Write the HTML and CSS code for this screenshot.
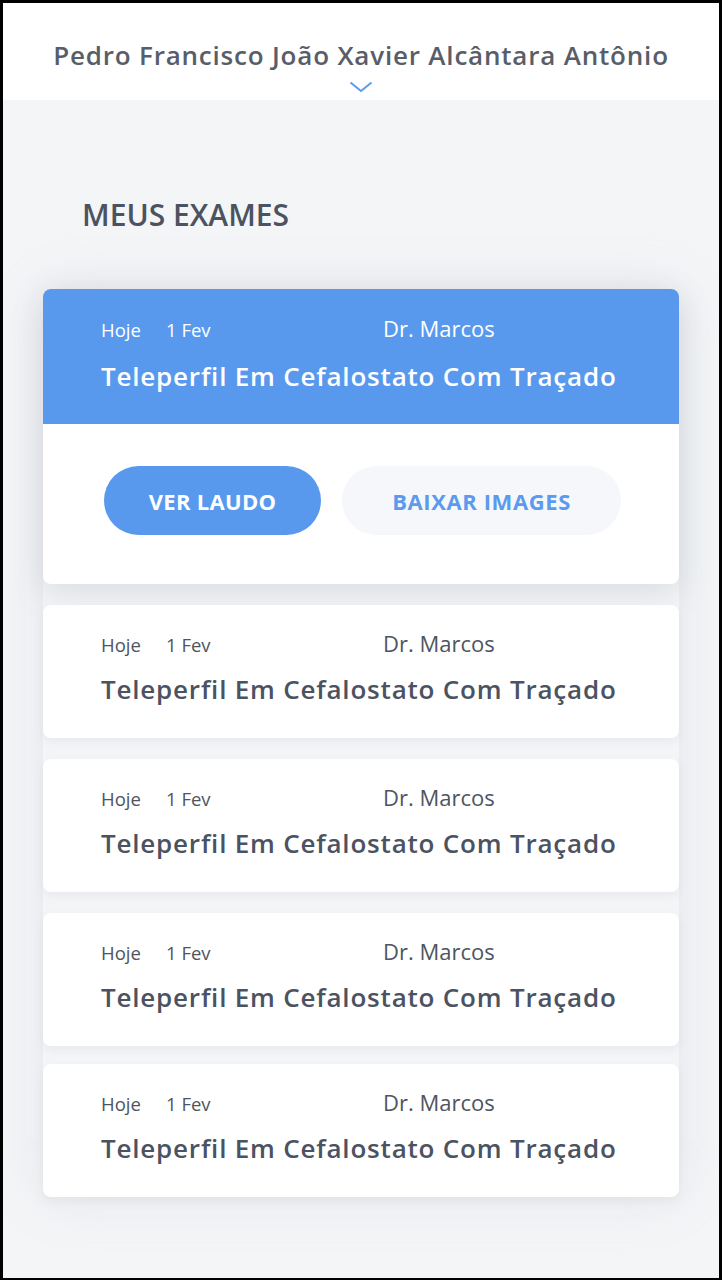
FILE: index.html
```html
<!DOCTYPE html>
<html lang="pt">
<head>
<meta charset="utf-8">
<link rel="stylesheet" href="styles.css">
<title>Meus Exames</title>
</head>
<body>
<div class="frame">
  <header class="top">
    <div class="patient">Pedro Francisco João Xavier Alcântara Antônio</div>
    <svg class="chev" width="24" height="12" viewBox="0 0 24 12"><path d="M1.5 1.5 L12 10 L22.5 1.5" fill="none" stroke="#5b9af0" stroke-width="2"/></svg>
  </header>
  <main class="content">
    <h1 class="title">MEUS EXAMES</h1>
    <div class="list">
      <div class="card open">
        <div class="card-head">
          <div class="meta"><span class="day">Hoje</span><span class="date">1 Fev</span><span class="doc">Dr. Marcos</span></div>
          <div class="exam">Teleperfil Em Cefalostato Com Traçado</div>
        </div>
        <div class="actions">
          <button class="btn primary">VER LAUDO</button>
          <button class="btn secondary">BAIXAR IMAGES</button>
        </div>
      </div>
      <div class="card">
        <div class="card-head">
          <div class="meta"><span class="day">Hoje</span><span class="date">1 Fev</span><span class="doc">Dr. Marcos</span></div>
          <div class="exam">Teleperfil Em Cefalostato Com Traçado</div>
        </div>
      </div>
      <div class="card">
        <div class="card-head">
          <div class="meta"><span class="day">Hoje</span><span class="date">1 Fev</span><span class="doc">Dr. Marcos</span></div>
          <div class="exam">Teleperfil Em Cefalostato Com Traçado</div>
        </div>
      </div>
      <div class="card">
        <div class="card-head">
          <div class="meta"><span class="day">Hoje</span><span class="date">1 Fev</span><span class="doc">Dr. Marcos</span></div>
          <div class="exam">Teleperfil Em Cefalostato Com Traçado</div>
        </div>
      </div>
      <div class="card last">
        <div class="card-head">
          <div class="meta"><span class="day">Hoje</span><span class="date">1 Fev</span><span class="doc">Dr. Marcos</span></div>
          <div class="exam">Teleperfil Em Cefalostato Com Traçado</div>
        </div>
      </div>
    </div>
  </main>
</div>
</body>
</html>
```

FILE: styles.css
```css
* { box-sizing: border-box; }
html, body { margin: 0; padding: 0; }
body {
  font-family: "Open Sans", "Noto Sans", sans-serif;
  color: #4e5561;
  background: #000;
}
.frame {
  width: 722px;
  height: 1280px;
  border: 3px solid #000;
  border-bottom-width: 2px;
  background: #f4f5f7;
  overflow: hidden;
  display: flex;
  flex-direction: column;
}
.top {
  height: 97px;
  background: #fff;
  display: flex;
  flex-direction: column;
  align-items: center;
  padding-top: 34px;
  flex-shrink: 0;
}
.patient {
  font-size: 26px;
  line-height: 36px;
  font-weight: 600;
  color: #585e69;
  letter-spacing: 0.8px;
}
.chev { margin-top: 8px; display: block; }
.content {
  flex: 1;
  padding: 95px 40px 0 40px;
}
.title {
  margin: 0 0 0 39px;
  font-size: 30px;
  line-height: 40px;
  font-weight: 600;
  color: #4b5260;
  letter-spacing: 0;
}
.list {
  margin-top: 54px;
  display: flex;
  flex-direction: column;
  gap: 21px;
  border-radius: 30px;
  box-shadow: 0 0 40px 10px rgba(200, 205, 212, 0.25);
}
.card {
  background: #fff;
  border-radius: 8px;
  overflow: hidden;
  box-shadow: 0 4px 10px rgba(150, 158, 170, 0.12);
}
.card.open {
  box-shadow: 0 8px 30px rgba(120, 130, 145, 0.22);
}
.card.last { margin-top: -3px; }
.card-head {
  height: 133px;
  padding: 23px 20px 0 58px;
}
.open .card-head {
  height: 135px;
  padding-top: 24px;
  background: #5899ee;
  color: #fff;
}
.meta {
  display: flex;
  align-items: baseline;
  height: 30px;
}
.day { font-size: 18.5px; width: 65px; }
.date { font-size: 18.5px; width: 217px; }
.doc { font-size: 22px; }
.exam {
  margin-top: 13px;
  font-size: 26px;
  line-height: 36px;
  font-weight: 600;
  letter-spacing: 0.8px;
  color: #4b5261;
}
.open .exam { color: #fff; margin-top: 15px; }
.actions {
  height: 160px;
  display: flex;
  gap: 21px;
  padding: 42px 0 0 61px;
}
.btn {
  height: 69px;
  border: none;
  border-radius: 35px;
  font-family: "Open Sans", "Noto Sans", sans-serif;
  font-size: 22px;
  font-weight: 700;
  letter-spacing: 0.3px;
}
.btn.primary {
  width: 217px;
  background: #5899ee;
  color: #fff;
}
.btn.secondary {
  width: 279px;
  background: #f5f7fb;
  color: #5b9aec;
  letter-spacing: 0.6px;
}
```
